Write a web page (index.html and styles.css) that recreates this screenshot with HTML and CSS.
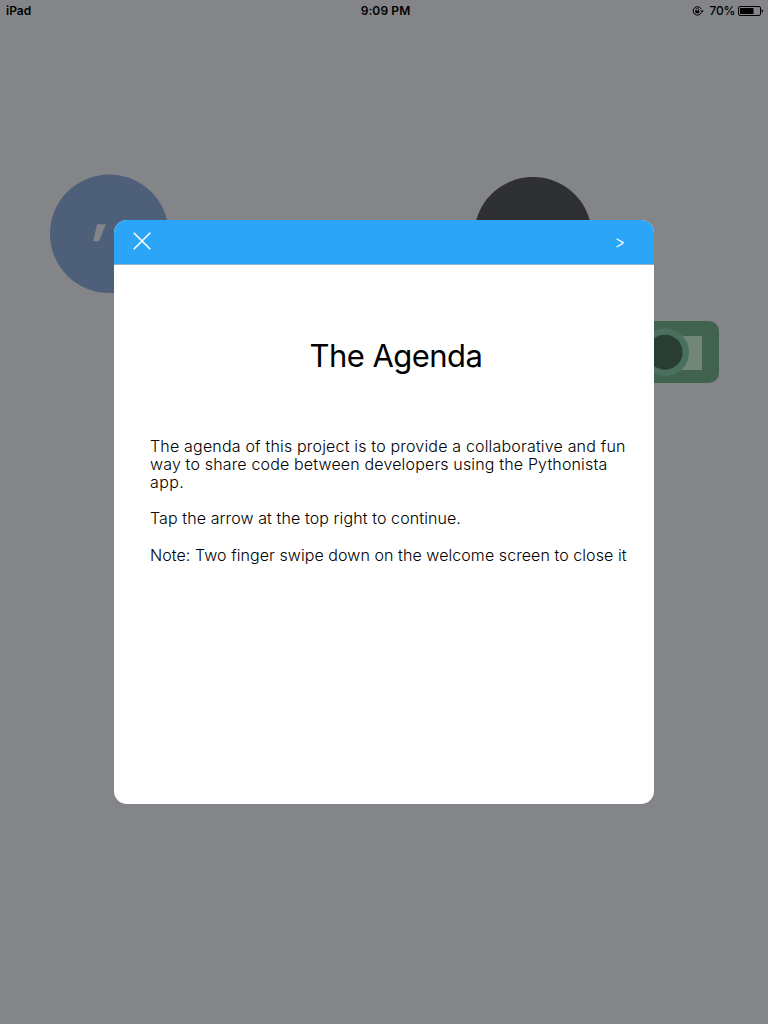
FILE: index.html
```html
<!DOCTYPE html>
<html lang="en">
<head>
<meta charset="utf-8">
<title>The Agenda</title>
<link rel="stylesheet" href="styles.css">
</head>
<body>
<div class="screen">
  <svg class="backdrop" viewBox="0 0 768 1024" aria-hidden="true">
    <circle cx="109.300" cy="233.800" r="59.300" fill="#4e5f79"/>
    <path d="M97.200 224.200h8.600l-6.800 17h-6z" fill="#848588"/>
    <circle cx="533" cy="236" r="59" fill="#2f3034"/>
    <rect x="594" y="321" width="125" height="62" rx="10" fill="#40624f"/>
    <rect x="640" y="336" width="62" height="34" fill="#718679"/>
    <circle cx="665" cy="352.200" r="20.800" fill="#293d32" stroke="#4a6f5d" stroke-width="6.500"/>
  </svg>
  <header class="status">
    <span class="device">iPad</span>
    <span class="time">9:09 PM</span>
    <span class="power">
      <svg class="lock" viewBox="0 0 12 10" aria-hidden="true">
        <path d="M9.200 6.700A4.200 4.200 0 1 1 9.200 3.200" fill="none" stroke="#000" stroke-width="1"/>
        <path d="M8.200 4.500h3.600l-1.800 2.200z"/>
        <path d="M3.300 4.500h4v2.700h-4z"/>
        <path d="M4 4.700V3.600a1.300 1.300 0 0 1 2.600 0v1.100" fill="none" stroke="#000" stroke-width=".8"/>
      </svg>
      <span class="percent">70%</span>
      <svg class="battery" viewBox="0 0 25 10" aria-hidden="true">
        <rect x=".5" y=".5" width="22" height="9" rx="1.500" fill="none" stroke="#000"/>
        <rect x="2" y="2" width="13.500" height="6"/>
        <path d="M23.700 3.200q1.300.3 1.300 1.800t-1.300 1.800z"/>
      </svg>
    </span>
  </header>
  <main class="modal">
    <nav class="bar">
      <svg class="close" viewBox="0 0 18 18" aria-label="Close"><path d="M.7.7l16.600 16.600M17.300.7L.7 17.300" stroke="#fff" stroke-width="1.600" fill="none"/></svg>
      <span class="next">&gt;</span>
    </nav>
    <h1 class="title">The Agenda</h1>
    <div class="copy">
      <p class="para"><span class="line first">The agenda of this project is to provide a collaborative and fun</span> <span class="line second">way to share code between developers using the Pythonista</span> <span class="line third">app.</span></p>
      <p class="para"><span class="line tap">Tap the arrow at the top right to continue.</span></p>
      <p class="para"><span class="line note">Note: Two finger swipe down on the welcome screen to close it</span></p>
    </div>
  </main>
</div>
</body>
</html>
```
FILE: styles.css
```css
* { box-sizing: border-box; }
body { margin: 0; background: #848588; font-family: Inter, "Liberation Sans", sans-serif; color: #000; }
.screen { position: relative; width: 768px; height: 1024px; overflow: hidden; }
.backdrop { position: absolute; inset: 0; width: 768px; height: 1024px; }
.status { position: relative; display: grid; grid-template-columns: 1fr auto 1fr; align-items: center; height: 20px; padding: 1px 5px 0 6px; font-size: 12px; font-weight: 600; line-height: 20px; }
.time { letter-spacing: .1px; margin-left: 2px; }
.power { display: flex; justify-content: flex-end; align-items: center; }
.lock { width: 12px; height: 10px; margin: 0 6px 1px 0; }
.percent { font-weight: 500; letter-spacing: -.3px; margin-right: 3px; }
.battery { width: 25px; height: 10px; margin-bottom: 1px; }
.modal { position: relative; width: 540px; height: 584px; margin: 200px auto 0; border-radius: 13px; overflow: hidden; background: #fff; }
.bar { display: flex; justify-content: space-between; align-items: center; height: 45px; padding: 0 29px 3px 19px; background: #2aa5f7; border-bottom: 1px solid #91b5cf; }
.close { width: 18px; height: 18px; }
.next { color: #fff; font-family: "Liberation Sans", sans-serif; font-size: 17px; line-height: 20px; padding-top: 4px; transform: scale(.83, 1.12); }
.title { margin: 70px 0 0; padding-left: 24px; text-align: center; font-size: 31px; font-weight: 400; line-height: 42px; letter-spacing: -.55px; }
.copy { padding: 60px 0 0 36px; font-size: 16px; font-weight: 300; line-height: 18.1px; }
.para { margin: 0 0 18.1px; }
.line { display: block; width: max-content; white-space: nowrap; }
.first { letter-spacing: .18px; }
.second { letter-spacing: .16px; }
.third { letter-spacing: .4px; }
.tap { letter-spacing: .1px; }
.note { letter-spacing: .07px; }
```
